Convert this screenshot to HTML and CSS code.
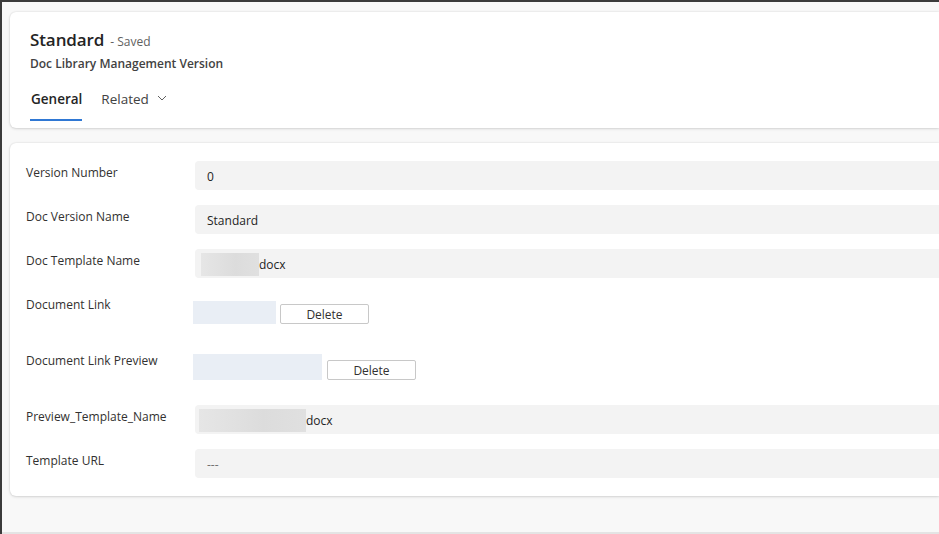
FILE: index.html
```html
<!DOCTYPE html>
<html>
<head>
<meta charset="utf-8">
<link rel="stylesheet" href="styles.css">
</head>
<body>
<div class="frame">
  <div class="header card">
    <div class="title-row"><span class="title">Standard</span><span class="saved">- Saved</span></div>
    <div class="entity">Doc Library Management Version</div>
    <div class="tabs">
      <div class="tab active">General</div>
      <div class="tab">Related
        <svg class="chev" width="12" height="12" viewBox="0 0 12 12"><path d="M2 4 L6 8 L10 4" fill="none" stroke="#616161" stroke-width="1"/></svg>
      </div>
    </div>
  </div>
  <div class="form card">
    <div class="row">
      <div class="label">Version Number</div>
      <div class="input">0</div>
    </div>
    <div class="row">
      <div class="label">Doc Version Name</div>
      <div class="input">Standard</div>
    </div>
    <div class="row">
      <div class="label">Doc Template Name</div>
      <div class="input redacted"><span class="blur w58"></span>docx</div>
    </div>
    <div class="row file-row r1">
      <div class="label">Document Link</div>
      <div class="file"><span class="link-box w84"></span><button class="del">Delete</button></div>
    </div>
    <div class="row file-row r2">
      <div class="label">Document Link Preview</div>
      <div class="file f2"><span class="link-box w130"></span><button class="del">Delete</button></div>
    </div>
    <div class="row">
      <div class="label">Preview_Template_Name</div>
      <div class="input redacted r3"><span class="blur w107"></span>docx</div>
    </div>
    <div class="row">
      <div class="label">Template URL</div>
      <div class="input empty">---</div>
    </div>
  </div>
</div>
</body>
</html>
```
FILE: styles.css
```css
html, body {
  margin: 0;
  padding: 0;
  width: 939px;
  height: 534px;
  overflow: hidden;
  font-family: "Segoe UI", "Open Sans", "Noto Sans", sans-serif;
  color: #242424;
}
body {
  background: #3b3b3b;
}
.frame {
  margin: 2px 0 0 2px;
  height: 532px;
  background: #f8f8f8;
  border-bottom: 2px solid #e4e4e4;
  padding: 10px 0 0 8px;
  box-sizing: border-box;
  display: flex;
  flex-direction: column;
  gap: 15px;
}
.card {
  background: #fff;
  border-radius: 6px 0 0 6px;
  box-shadow: 0 0 2px rgba(0,0,0,0.12), 0 1px 3px rgba(0,0,0,0.12);
}
.header {
  height: 116px;
  box-sizing: border-box;
  padding: 16px 0 0 20px;
}
.title-row {
  display: flex;
  align-items: baseline;
  gap: 6px;
  height: 26px;
}
.title {
  font-size: 17px;
  font-weight: 600;
  color: #242424;
  letter-spacing: -0.1px;
}
.saved {
  font-size: 12px;
  color: #616161;
}
.entity {
  font-size: 12px;
  font-weight: 600;
  color: #424242;
  margin-top: 1px;
}
.tabs {
  display: flex;
  gap: 19px;
  margin-top: 17px;
}
.tab {
  font-size: 13.5px;
  color: #424242;
  padding-bottom: 10px;
  display: flex;
  align-items: center;
  gap: 7px;
  height: 20px;
  box-sizing: content-box;
}
.tab.active {
  font-weight: 600;
  color: #242424;
  border-bottom: 2px solid #2f78d4;
  padding-left: 1px;
}
.chev { margin-top: -2px; }
.form {
  height: 353px;
  box-sizing: border-box;
  padding: 18px 0 0 16px;
  display: flex;
  flex-direction: column;
}
.row {
  display: flex;
  height: 44px;
}
.label {
  width: 169px;
  font-size: 12px;
  color: #323130;
  padding-top: 3px;
}
.input {
  flex: 1;
  height: 29px;
  background: #f3f3f3;
  border-radius: 4px 0 0 4px;
  font-size: 12px;
  color: #242424;
  display: flex;
  align-items: center;
  padding-left: 12px;
  padding-top: 1px;
  box-sizing: border-box;
}
.input.redacted { padding-left: 6px; }
.input.r3 { padding-left: 4px; }
.input.empty { color: #707070; }
.blur {
  display: inline-block;
  height: 23px;
  background: linear-gradient(90deg, #e6e6e6, #dcdcdc 60%, #e0e0e0);
}
.w58 { width: 58px; }
.w107 { width: 107px; }
.file-row { height: 56px; }
.file {
  display: flex;
  margin-left: -2px;
  margin-top: 8px;
  gap: 4px;
  align-items: flex-start;
}
.link-box {
  display: inline-block;
  background: #e9eef5;
  height: 23px;
}
.file.f2 { gap: 5px; margin-top: 5px; }
.file.f2 .link-box { height: 26px; }
.w84 { width: 83px; }
.w130 { width: 129px; }
.del {
  font-family: inherit;
  font-size: 12px;
  color: #323130;
  background: #fff;
  border: 1px solid #c8c8c8;
  border-radius: 2px;
  width: 89px;
  height: 20px;
  margin-top: 3px;
  padding: 0;
}
.file.f2 .del { margin-top: 6px; }
```
